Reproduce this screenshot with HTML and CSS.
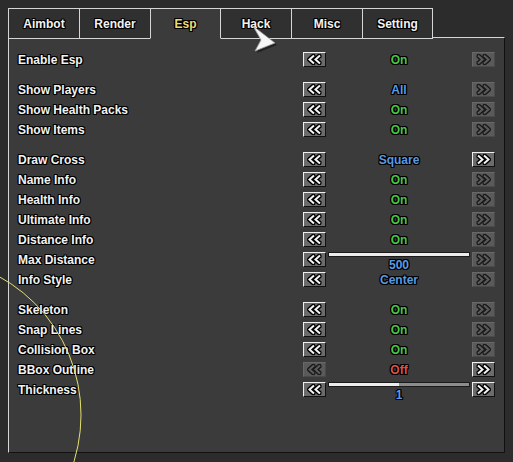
FILE: index.html
```html
<!DOCTYPE html>
<html>
<head>
  <title>Esp Menu</title>
  <link rel="stylesheet" href="styles.css">
</head>
<body>
  <svg width="0" height="0" class="defs">
    <symbol id="left" viewBox="0 0 21 13">
      <polyline points="10,2.5 5.5,6.5 10,10.5" />
      <polyline points="16,2.5 11.5,6.5 16,10.5" />
    </symbol>
    <symbol id="right" viewBox="0 0 21 13">
      <polyline points="5,2.5 9.5,6.5 5,10.5" />
      <polyline points="11,2.5 15.5,6.5 11,10.5" />
    </symbol>
  </svg>

  <div class="menu">
    <div class="tabs">
      <div class="tab">Aimbot</div>
      <div class="tab">Render</div>
      <div class="tab active">Esp</div>
      <div class="tab">Hack</div>
      <div class="tab">Misc</div>
      <div class="tab last">Setting</div>
    </div>

    <div class="panel">
      <div class="row">
        <span class="label">Enable Esp</span>
        <button class="arrow"><svg><use href="#left"/></svg></button>
        <span class="value on">On</span>
        <button class="arrow off"><svg><use href="#right"/></svg></button>
      </div>
      <div class="gap"></div>

      <div class="row">
        <span class="label">Show Players</span>
        <button class="arrow"><svg><use href="#left"/></svg></button>
        <span class="value blue">All</span>
        <button class="arrow off"><svg><use href="#right"/></svg></button>
      </div>
      <div class="row">
        <span class="label">Show Health Packs</span>
        <button class="arrow"><svg><use href="#left"/></svg></button>
        <span class="value on">On</span>
        <button class="arrow off"><svg><use href="#right"/></svg></button>
      </div>
      <div class="row">
        <span class="label">Show Items</span>
        <button class="arrow"><svg><use href="#left"/></svg></button>
        <span class="value on">On</span>
        <button class="arrow off"><svg><use href="#right"/></svg></button>
      </div>
      <div class="gap"></div>

      <div class="row">
        <span class="label">Draw Cross</span>
        <button class="arrow"><svg><use href="#left"/></svg></button>
        <span class="value blue">Square</span>
        <button class="arrow"><svg><use href="#right"/></svg></button>
      </div>
      <div class="row">
        <span class="label">Name Info</span>
        <button class="arrow"><svg><use href="#left"/></svg></button>
        <span class="value on">On</span>
        <button class="arrow off"><svg><use href="#right"/></svg></button>
      </div>
      <div class="row">
        <span class="label">Health Info</span>
        <button class="arrow"><svg><use href="#left"/></svg></button>
        <span class="value on">On</span>
        <button class="arrow off"><svg><use href="#right"/></svg></button>
      </div>
      <div class="row">
        <span class="label">Ultimate Info</span>
        <button class="arrow"><svg><use href="#left"/></svg></button>
        <span class="value on">On</span>
        <button class="arrow off"><svg><use href="#right"/></svg></button>
      </div>
      <div class="row">
        <span class="label">Distance Info</span>
        <button class="arrow"><svg><use href="#left"/></svg></button>
        <span class="value on">On</span>
        <button class="arrow off"><svg><use href="#right"/></svg></button>
      </div>
      <div class="row">
        <span class="label">Max Distance</span>
        <button class="arrow"><svg><use href="#left"/></svg></button>
        <div class="slider">
          <div class="track"><div class="fill" style="width: 100%"></div></div>
          <span class="value blue">500</span>
        </div>
        <button class="arrow off"><svg><use href="#right"/></svg></button>
      </div>
      <div class="row">
        <span class="label">Info Style</span>
        <button class="arrow"><svg><use href="#left"/></svg></button>
        <span class="value blue">Center</span>
        <button class="arrow off"><svg><use href="#right"/></svg></button>
      </div>
      <div class="gap"></div>

      <div class="row">
        <span class="label">Skeleton</span>
        <button class="arrow"><svg><use href="#left"/></svg></button>
        <span class="value on">On</span>
        <button class="arrow off"><svg><use href="#right"/></svg></button>
      </div>
      <div class="row">
        <span class="label">Snap Lines</span>
        <button class="arrow"><svg><use href="#left"/></svg></button>
        <span class="value on">On</span>
        <button class="arrow off"><svg><use href="#right"/></svg></button>
      </div>
      <div class="row">
        <span class="label">Collision Box</span>
        <button class="arrow"><svg><use href="#left"/></svg></button>
        <span class="value on">On</span>
        <button class="arrow off"><svg><use href="#right"/></svg></button>
      </div>
      <div class="row">
        <span class="label">BBox Outline</span>
        <button class="arrow off"><svg><use href="#left"/></svg></button>
        <span class="value red">Off</span>
        <button class="arrow"><svg><use href="#right"/></svg></button>
      </div>
      <div class="row">
        <span class="label">Thickness</span>
        <button class="arrow"><svg><use href="#left"/></svg></button>
        <div class="slider">
          <div class="track"><div class="fill" style="width: 50%"></div></div>
          <span class="value blue">1</span>
        </div>
        <button class="arrow"><svg><use href="#right"/></svg></button>
      </div>
    </div>
  </div>

  <!-- fov circle drawn over the menu -->
  <svg class="fov" width="513" height="462">
    <circle cx="-77" cy="415" r="158" />
  </svg>

  <svg class="cursor" width="30" height="34" viewBox="0 0 30 34">
    <path class="shadow" d="M3 5 L26 22 L6 30 L11 19 Z" />
    <path class="pointer" d="M2 3 L24 20 L4 28 L10 17 Z" />
  </svg>
</body>
</html>
```

FILE: styles.css
```css
body {
  margin: 0;
  background-color: #2c2c2c;
  font-family: "Liberation Sans", Arial, sans-serif;
  font-weight: bold;
  font-size: 12px;
  color: #f2f2f2;
  width: 513px;
  height: 462px;
  overflow: hidden;
  position: relative;
}
.defs {
  position: absolute;
}
.menu {
  padding: 8px 0 0 8px;
  width: 497px;
}
.tabs {
  display: flex;
  height: 30px;
  position: relative;
  z-index: 1;
  margin-bottom: -1px;
}
.tab {
  width: 70px;
  height: 29px;
  line-height: 31px;
  text-align: center;
  background-color: #303030;
  border-top: 1px solid #d6d6d6;
  border-left: 1px solid #d6d6d6;
  border-bottom: 1px solid #d6d6d6;
  text-shadow: 1px 0 #000, -1px 0 #000, 0 1px #000, 0 -1px #000, 1px 1px #000, -1px -1px #000, 1px -1px #000, -1px 1px #000;
}
.tab.last {
  width: 69px;
  border-right: 1px solid #d6d6d6;
}
.tab.active {
  background-color: #3b3b3b;
  border-bottom-color: #3b3b3b;
  border-right: 1px solid #d6d6d6;
  width: 69px;
  color: #e8dc78;
}
.tab.active + .tab {
  border-left: none;
}
.panel {
  background-color: #3b3b3b;
  border-top: 1px solid #d6d6d6;
  border-left: 1px solid #d6d6d6;
  border-right: 1px solid #111;
  border-bottom: 1px solid #111;
  height: 403px;
  padding: 11px 9px 0 8px;
}
.row {
  display: grid;
  grid-template-columns: 1fr 23px 146px 23px;
  align-items: center;
  height: 20px;
}
.gap {
  height: 10px;
}
.label {
  padding: 2px 0 0 1px;
  text-shadow: 1px 0 #000, -1px 0 #000, 0 1px #000, 0 -1px #000, 1px 1px #000, -1px -1px #000, 1px -1px #000, -1px 1px #000;
}
.value {
  padding-top: 2px;
  text-align: center;
  text-shadow: 1px 0 #000, -1px 0 #000, 0 1px #000, 0 -1px #000, 1px 1px #000, -1px -1px #000, 1px -1px #000, -1px 1px #000;
}
.value.on {
  color: #4cc44c;
}
.value.blue {
  color: #5a9ae2;
}
.value.red {
  color: #d8544a;
}
.arrow {
  width: 23px;
  height: 15px;
  padding: 0;
  margin: 0;
  background-color: #6c6c6c;
  border-top: 1px solid #f0f0f0;
  border-left: 1px solid #f0f0f0;
  border-right: 1px solid #111;
  border-bottom: 1px solid #111;
  display: block;
}
.arrow svg {
  display: block;
  width: 21px;
  height: 13px;
  fill: none;
  stroke: #f4f4f4;
  stroke-width: 2;
  overflow: visible;
  filter: drop-shadow(1px 0 0 #000) drop-shadow(-1px 0 0 #000) drop-shadow(0 1px 0 #000) drop-shadow(0 -1px 0 #000);
}
.arrow.off {
  background-color: #5a5a5a;
  border-color: #686868 #4a4a4a #4a4a4a #686868;
}
.arrow.off svg {
  stroke: #5c5c5c;
  filter: drop-shadow(1px 0 0 #1a1a1a) drop-shadow(-1px 0 0 #1a1a1a) drop-shadow(0 1px 0 #1a1a1a) drop-shadow(0 -1px 0 #1a1a1a);
}
.slider {
  height: 20px;
  padding: 3px 2px 0 2px;
  box-sizing: border-box;
  display: flex;
  flex-direction: column;
}
.track {
  height: 3px;
  background-color: #8c8c8c;
  border: 1px solid #1a1a1a;
}
.fill {
  height: 3px;
  background-color: #ececec;
}
.slider .value {
  line-height: 14px;
  padding-top: 1px;
}
.fov {
  position: absolute;
  left: 0;
  top: 0;
  z-index: 2;
  pointer-events: none;
}
.fov circle {
  fill: none;
  stroke: #e6e070;
  stroke-width: 1;
}
.cursor {
  position: absolute;
  left: 251px;
  top: 23px;
  z-index: 3;
}
.cursor .shadow {
  fill: rgba(0, 0, 0, 0.45);
}
.cursor .pointer {
  fill: #f6f6f6;
  stroke: #9a9a9a;
  stroke-width: 0.8;
}
```
